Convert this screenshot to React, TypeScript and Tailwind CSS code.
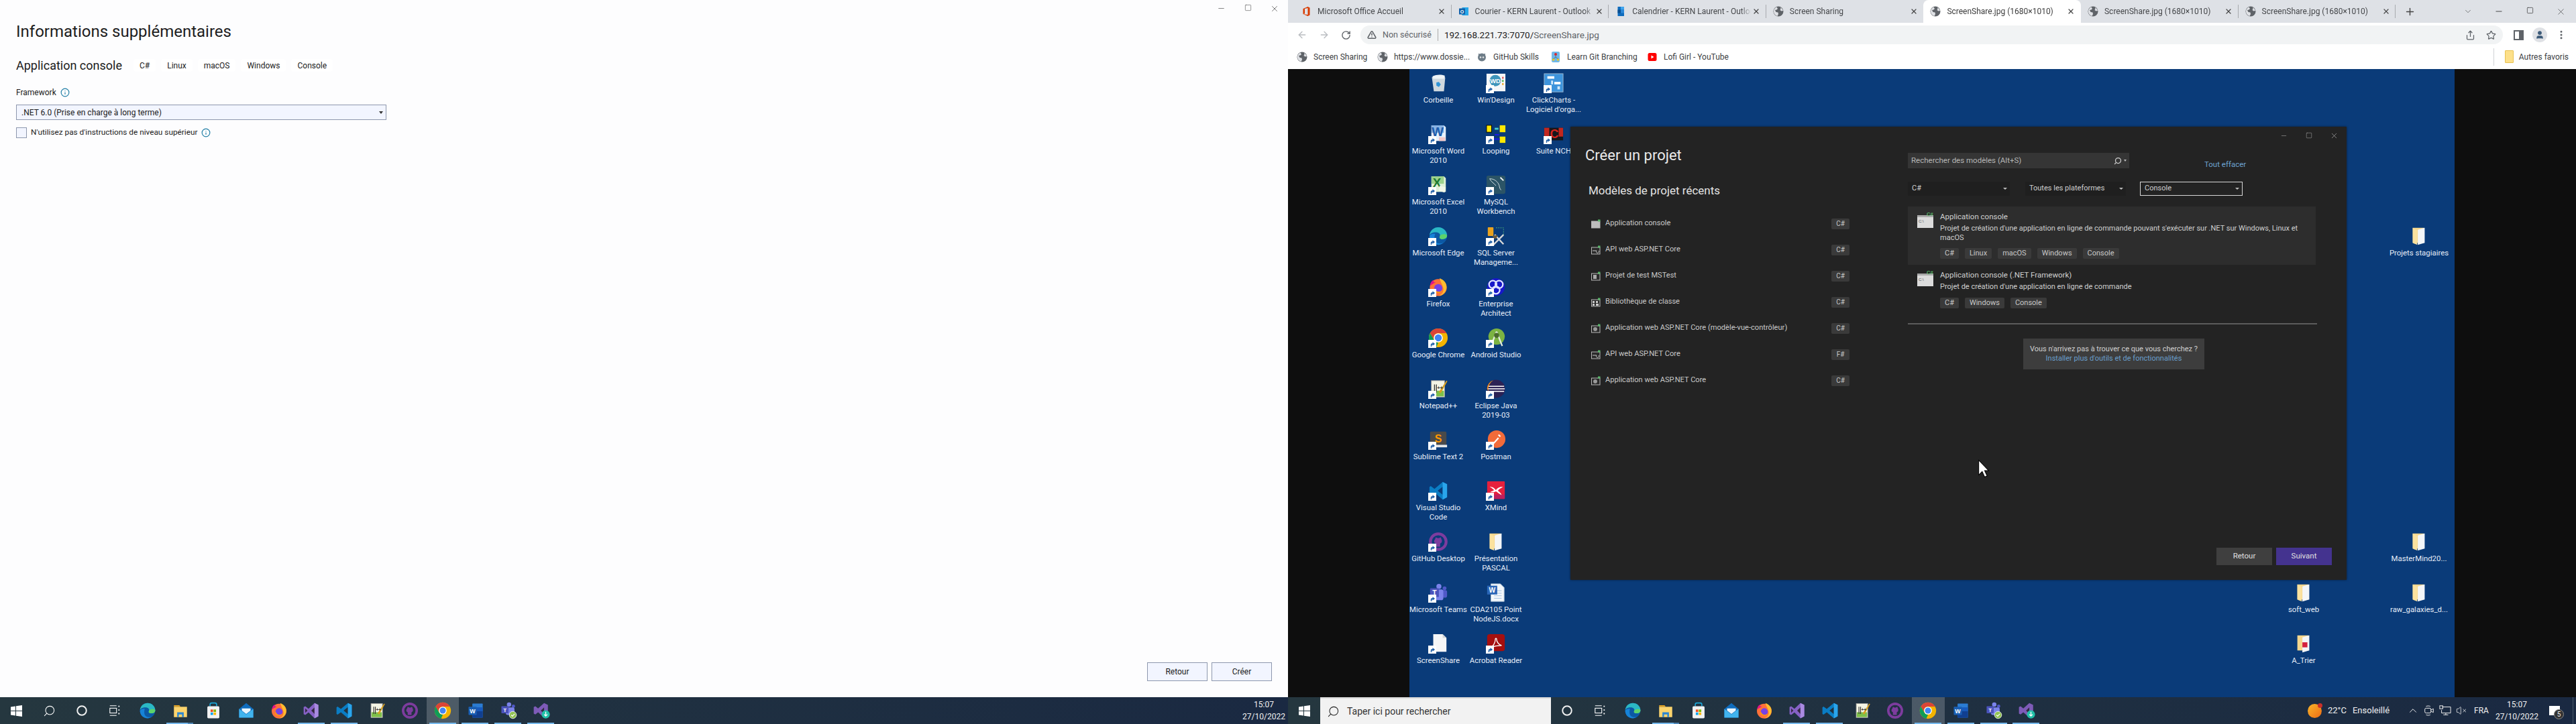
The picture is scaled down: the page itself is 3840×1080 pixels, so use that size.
import type { ReactNode } from "react"
import { ArrowLeft, ArrowRight, ChevronDown, ChevronUp, Info, Minus, MoreVertical, Plus, RotateCw, Search, Share, Square, Star, TriangleAlert, User, VolumeX, X } from "lucide-react"

const Svg = ({ children }: { children: ReactNode }) => (
  <svg viewBox="0 0 32 32" className="size-full">{children}</svg>
)

const Chrome = () => (
  <Svg>
    <circle cx="16" cy="16" r="15" fill="#f4b400" />
    <path d="M3 8.5A15 15 0 0 1 29 8.5H16a7.5 7.5 0 0 0-6.5 11.25z" fill="#db4437" />
    <path d="M3 8.5l6.5 11.25A7.5 7.5 0 0 0 16 23.5L13 30.7A15 15 0 0 1 3 8.5z" fill="#0f9d58" />
    <circle cx="16" cy="16" r="7.2" fill="#fff" />
    <circle cx="16" cy="16" r="5.6" fill="#4285f4" />
  </Svg>
)
const Edge = () => (
  <Svg>
    <circle cx="16" cy="16" r="14" fill="#0c59a4" />
    <path d="M2 15C3 7 9 2 16 2c8 0 14 6 14 13 0 4-3 6-7 6-3 0-5-1-5-3 0-1 1-1 1-3 0-3-3-5-7-5-5 0-9 2-10 5z" fill="#2bb8c4" />
    <path d="M30 15c0 4-3 6-7 6-3 0-5-1-5-3l1-3c3-2 8-3 11 0z" fill="#5dd36b" />
    <path d="M10 20c0 6 6 10 14 7-3 2-5 3-8 3C8 30 2 24 2 16c2-3 6-4 9-3-1 2-1 4-1 7z" fill="#1683d8" />
  </Svg>
)
const Firefox = () => (
  <Svg>
    <circle cx="16" cy="17" r="13.5" fill="#ff7139" />
    <path d="M18 2c8 3 12 9 11 16-1 7-7 12-13 12 6-2 9-6 8-12-1-5-4-9-6-16z" fill="#ffbd2e" />
    <path d="M3 14c0-4 2-7 5-9 0 3 2 4 4 4-3 1-6 3-9 5z" fill="#e31587" />
    <circle cx="16" cy="18" r="6.5" fill="#7542e5" />
    <path d="M10 18c1 5 8 8 13 3-2 6-12 6-15 0z" fill="#ff980e" />
  </Svg>
)
const Vs = () => (
  <Svg>
    <path d="M22 2l7 3.5v21L22 30 11 19.5 5 24l-3-1.5v-13L5 8l6 4.5z" fill="#8661c5" />
    <path d="M22 10l-6 6 6 6z" fill="#33283f" />
    <path d="M5 12v8l4-4z" fill="#33283f" />
    <path d="M22 2l7 3.5v21L22 30z" fill="#a98ae0" />
  </Svg>
)
const VsInstaller = () => (
  <Svg>
    <path d="M21 2l7 3.5v15L21 29 10 19 5 23l-3-1.5v-12L5 8l5 4z" fill="#7e5bb8" />
    <path d="M21 10l-6 6 6 6z" fill="#2f2d3f" />
    <circle cx="24" cy="23" r="7.5" fill="#21c0a8" />
    <path d="M24 18v8m-3-3l3 3 3-3" stroke="#fff" strokeWidth="1.6" fill="none" />
  </Svg>
)
const VsCode = () => (
  <Svg>
    <path d="M23 2l7 3.5v21L23 30 10 19l-6 4.5L2 22v-12l2-1.5L10 13zM23 9.5L15 16l8 6.5z" fill="#0a7dc4" />
    <path d="M23 2l7 3.5v21L23 30v-7.5V9.5z" fill="#2aa5ec" />
  </Svg>
)
const Notepad = () => (
  <Svg>
    <rect x="5" y="3" width="21" height="26" fill="#f5f5e6" stroke="#999" />
    <rect x="6" y="19" width="19" height="9" fill="#7ec04a" />
    <path d="M10 9v13M13 9v13" stroke="#333" strokeWidth="1.4" />
    <path d="M17 21L29 3l1.5 1L20 23z" fill="#d9a021" />
    <text x="14" y="17" fontSize="8" fontWeight="700" fill="#333" fontFamily="Liberation Sans">++</text>
  </Svg>
)
const GithubApp = () => (
  <Svg>
    <circle cx="16" cy="16" r="12.5" fill="#fff0" stroke="#7d3c9e" strokeWidth="4.5" />
    <path d="M11 12l1-3 3 1.5h2l3-1.5 1 3c1.5 2.5 1 6-2 7v5h-7v-5c-3-1-3.5-4.5-1-7z" fill="#7d3c9e" />
  </Svg>
)
const Explorer = () => (
  <Svg>
    <path d="M4 6h10l2 3H4z" fill="#e2a324" />
    <rect x="4" y="9" width="24" height="19" fill="#fbd46d" />
    <path d="M10 28v-9h12v9h-3v-5h-6v5z" fill="#2c86d2" />
  </Svg>
)
const Store = () => (
  <Svg>
    <path d="M10 8V5a3 3 0 0 1 3-3h6a3 3 0 0 1 3 3v3" fill="none" stroke="#1aa7d8" strokeWidth="2" />
    <rect x="5" y="8" width="22" height="22" rx="2" fill="#f2f2f2" />
    <rect x="11" y="14" width="4.5" height="4.5" fill="#f25022" />
    <rect x="16.5" y="14" width="4.5" height="4.5" fill="#7fba00" />
    <rect x="11" y="19.5" width="4.5" height="4.5" fill="#00a4ef" />
    <rect x="16.5" y="19.5" width="4.5" height="4.5" fill="#ffb900" />
  </Svg>
)
const Mail = () => (
  <Svg>
    <path d="M3 13L16 2l13 11v16H3z" fill="#0f6cbd" />
    <path d="M3 13l13 10 13-10v16H3z" fill="#41b4ee" />
    <path d="M8 12h16v4l-8 6-8-6z" fill="#e8f5fd" />
  </Svg>
)
const Word = () => (
  <Svg>
    <rect x="10" y="3" width="19" height="26" rx="1" fill="#2b7cd3" />
    <rect x="10" y="10" width="19" height="7" fill="#185abd" />
    <rect x="10" y="17" width="19" height="12" fill="#103f91" />
    <rect x="3" y="9" width="15" height="15" rx="1" fill="#1a5fb4" />
    <text x="10.5" y="21" textAnchor="middle" fontSize="11" fontWeight="700" fill="#fff" fontFamily="Liberation Sans">W</text>
  </Svg>
)
const Teams = () => (
  <Svg>
    <circle cx="17" cy="6" r="4" fill="#7b83eb" />
    <circle cx="26" cy="9" r="3" fill="#5059c9" />
    <rect x="20" y="12" width="10" height="12" rx="3" fill="#5059c9" />
    <rect x="10" y="11" width="14" height="17" rx="3" fill="#7b83eb" />
    <rect x="3" y="9" width="14" height="14" rx="1" fill="#4b53bc" />
    <text x="10" y="20" textAnchor="middle" fontSize="11" fontWeight="700" fill="#fff" fontFamily="Liberation Sans">T</text>
  </Svg>
)
const TeamsBadge = () => (
  <Svg>
    <circle cx="17" cy="5" r="4" fill="#7b83eb" />
    <circle cx="25" cy="8" r="3" fill="#5059c9" />
    <rect x="11" y="10" width="16" height="14" rx="3" fill="#7b83eb" />
    <rect x="3" y="8" width="13" height="13" rx="1" fill="#4b53bc" />
    <text x="9.5" y="18.5" textAnchor="middle" fontSize="10" fontWeight="700" fill="#fff" fontFamily="Liberation Sans">T</text>
    <circle cx="24" cy="24" r="6.5" fill="#92c353" stroke="#fff" />
    <path d="M21 24l2.2 2.4 4-4.4" stroke="#fff" strokeWidth="1.5" fill="none" />
  </Svg>
)
const Bin = () => (
  <Svg>
    <path d="M6 6l20-2 1 4-2 21H9L6 8z" fill="#cfd8de" />
    <path d="M7 5c6-3 14-3 19-1l-1 5H8z" fill="#eef3f6" />
    <path d="M13 15l4-1 3 4-3 4-4-2z" fill="#2f94d8" />
  </Svg>
)
const WinDesign = () => (
  <Svg>
    <rect x="1" y="1" width="30" height="28" fill="#f4f6f8" />
    <circle cx="15" cy="12" r="9" fill="#3f95bb" />
    <text x="15" y="16" textAnchor="middle" fontSize="10" fontWeight="700" fill="#fff" fontFamily="Liberation Sans">WD</text>
    <rect x="26" y="6" width="2" height="3" fill="#d33" />
    <rect x="26" y="11" width="2" height="3" fill="#3a3" />
    <rect x="26" y="16" width="2" height="3" fill="#e90" />
  </Svg>
)
const ClickCharts = () => (
  <Svg>
    <rect x="1" y="1" width="30" height="29" fill="#3d94dc" stroke="#9cb7cf" />
    <rect x="6" y="5" width="11" height="4" fill="#fff" />
    <rect x="17" y="14" width="10" height="4" fill="#fff" />
    <rect x="12" y="12" width="3" height="6" fill="#cfe8fb" />
    <rect x="22" y="21" width="4" height="5" fill="#cfe8fb" />
  </Svg>
)
const Word2010 = () => (
  <Svg>
    <path d="M5 2h20l3 3v22H5z" fill="#e8f1fb" />
    <path d="M5 2h20v12H5z" fill="#3b7fd0" opacity="0.55" />
    <text x="15" y="19" textAnchor="middle" fontSize="20" fontWeight="700" fill="#1d5cab" fontFamily="Liberation Sans">W</text>
    <rect x="17" y="21" width="10" height="6" fill="#f3c9c9" />
  </Svg>
)
const Excel2010 = () => (
  <Svg>
    <path d="M5 2h20l3 3v22H5z" fill="#dff1d8" />
    <path d="M5 2h20v12H5z" fill="#6fbe5b" opacity="0.6" />
    <text x="14" y="19" textAnchor="middle" fontSize="20" fontWeight="700" fill="#1d7a32" fontFamily="Liberation Sans">X</text>
    <path d="M18 17l10 3-2 8-9-3z" fill="#f1f7e8" />
  </Svg>
)
const Looping = () => (
  <Svg>
    <rect x="1" y="2" width="8" height="11" fill="#ffe800" stroke="#000" />
    <rect x="22" y="2" width="9" height="11" fill="#ffe800" />
    <rect x="22" y="20" width="9" height="10" fill="#ffe800" />
    <path d="M9 24h13M14 17h7" stroke="#1a1ae6" strokeWidth="2" />
    <rect x="14" y="6" width="6" height="3" fill="#4cc" />
  </Svg>
)
const Nch = () => (
  <Svg>
    <rect x="1" y="6" width="30" height="20" fill="#17171b" />
    <rect x="1" y="6" width="8" height="14" fill="#c2271f" />
    <text x="17" y="22" textAnchor="middle" fontSize="19" fontWeight="700" fill="#d9251d" fontFamily="Liberation Sans">C</text>
    <rect x="24" y="6" width="7" height="14" fill="#c2271f" />
  </Svg>
)
const MySql = () => (
  <Svg>
    <rect x="1" y="1" width="30" height="29" rx="3" fill="#2b5466" />
    <path d="M6 6c6 0 11 3 14 8 2 3 1 7 4 10M6 6c2 5 7 7 10 11" stroke="#dbe6ea" strokeWidth="1" fill="none" />
    <path d="M23 4l5 5" stroke="#f2f6f7" strokeWidth="2" />
  </Svg>
)
const Ssms = () => (
  <Svg>
    <rect x="3" y="2" width="9" height="14" rx="1" fill="#e9a21f" />
    <path d="M16 3h12v12" stroke="#4caf7d" strokeWidth="1" strokeDasharray="2 1.5" fill="none" />
    <path d="M12 30L28 14M14 14l14 15" stroke="#d9d9d9" strokeWidth="2.4" />
    <path d="M10 17l7-3 2 2-4 5z" fill="#6d5a3a" />
  </Svg>
)
const Ea = () => (
  <Svg>
    <circle cx="16" cy="16" r="14" fill="#1717c9" />
    <circle cx="11" cy="12" r="6" fill="none" stroke="#dfe3ff" strokeWidth="2.4" />
    <circle cx="21" cy="12" r="6" fill="none" stroke="#dfe3ff" strokeWidth="2.4" />
    <circle cx="16" cy="21" r="6" fill="none" stroke="#dfe3ff" strokeWidth="2.4" />
  </Svg>
)
const Android = () => (
  <Svg>
    <circle cx="17" cy="14" r="13" fill="#7cb342" />
    <path d="M17 6l-9 23M17 6l9 23" stroke="#e4eee0" strokeWidth="2.4" />
    <circle cx="17" cy="12" r="4" fill="#4b6a2e" />
  </Svg>
)
const Eclipse = () => (
  <Svg>
    <circle cx="16" cy="16" r="14.5" fill="#2c2255" />
    <path d="M3 12h26M2 16h28M3 20h26" stroke="#fff" strokeWidth="1.8" />
    <path d="M2 16A14 14 0 0 1 12 2.5 16 16 0 0 0 4 20z" fill="#f7941e" />
  </Svg>
)
const Sublime = () => (
  <Svg>
    <rect x="3" y="3" width="26" height="21" rx="2" fill="#4a4a4a" />
    <rect x="2" y="24" width="28" height="4" fill="#e9e9e9" />
    <text x="16" y="20" textAnchor="middle" fontSize="17" fontWeight="700" fill="#ff9800" fontFamily="Liberation Sans">S</text>
  </Svg>
)
const Postman = () => (
  <Svg>
    <circle cx="17" cy="15" r="14" fill="#f26b3a" />
    <path d="M12 22l8-9M20 8l3 3" stroke="#fff" strokeWidth="2.4" />
  </Svg>
)
const XMind = () => (
  <Svg>
    <rect x="2" y="1" width="28" height="28" rx="1" fill="#e6203d" />
    <rect x="2" y="22" width="28" height="7" fill="#bf1f5c" />
    <path d="M6 10c5-1 8 3 10 5 2-3 6-6 11-5-4 2-7 4-8 6 3 2 5 4 6 7-4-2-7-5-9-6-2 1-5 2-9 1 2-1 5-2 6-3-2-2-4-4-7-5z" fill="#fff" />
  </Svg>
)
const Folder = () => (
  <Svg>
    <path d="M6 3h18v24H6z" fill="#f5d78e" />
    <path d="M6 3c2 2 4 3 7 3v24c-3-1-5-2-7-3z" fill="#fbe29f" />
    <path d="M14 6l11-3v24l-11 3z" fill="#f4f6f8" />
  </Svg>
)
const FolderRed = () => (
  <Svg>
    <path d="M6 3h18v24H6z" fill="#f5d78e" />
    <path d="M14 6l11-3v24l-11 3z" fill="#f4f6f8" />
    <rect x="14" y="14" width="8" height="8" fill="#d4213d" />
  </Svg>
)
const Docx = () => (
  <Svg>
    <path d="M8 2h15l6 6v22H8z" fill="#f3f7fb" stroke="#a9bfd3" />
    <path d="M13 13h12M13 17h12M13 21h12M13 25h12" stroke="#9fbfe0" />
    <rect x="2" y="5" width="16" height="14" fill="#2a66b8" />
    <text x="10" y="16" textAnchor="middle" fontSize="11" fontWeight="700" fill="#fff" fontFamily="Liberation Sans">W</text>
  </Svg>
)
const BlankDoc = () => (
  <Svg>
    <path d="M8 1h15l6 6v22H8z" fill="#f5f6f7" />
    <path d="M23 1l6 6h-6z" fill="#cfd4d8" />
  </Svg>
)
const Acrobat = () => (
  <Svg>
    <rect x="2" y="1" width="28" height="27" rx="4" fill="#a50f0f" />
    <path d="M8 22c4-2 7-8 7-13 0-2 2-2 2 0 0 5 4 9 8 10-5 0-12 1-17 3z" fill="none" stroke="#fff" strokeWidth="1.4" />
  </Svg>
)
const Office = () => (
  <Svg>
    <path d="M7 8l14-6 6 3v22l-6 3-14-6 14 2V6L12 8v15l-5 1z" fill="#d83b01" />
  </Svg>
)
const Outlook = () => (
  <Svg>
    <rect x="11" y="4" width="19" height="24" fill="#28a8ea" />
    <rect x="2" y="7" width="18" height="18" rx="1" fill="#0f5fa8" />
    <text x="11" y="21" textAnchor="middle" fontSize="14" fontWeight="700" fill="#fff" fontFamily="Liberation Sans">O</text>
  </Svg>
)
const Calendar = () => (
  <Svg>
    <rect x="7" y="2" width="19" height="28" rx="1" fill="#0f6cbd" />
    <rect x="16" y="2" width="10" height="9" fill="#41a5ee" />
    <rect x="16" y="11" width="10" height="10" fill="#2b88d8" />
    <rect x="7" y="11" width="9" height="10" fill="#0a4f90" />
  </Svg>
)
const Globe = () => (
  <Svg>
    <circle cx="16" cy="16" r="15" fill="#5f6368" />
    <path d="M11 3l3 5-3 3-5 1 3 6 6 1 1 5-3 6c-6-2-11-7-11-14 0-6 4-11 9-13zM22 4c4 2 7 6 8 10l-5 1-4-3 2-4z" fill="#dfe1e5" />
  </Svg>
)
const Octo = () => (
  <Svg>
    <circle cx="16" cy="17" r="12" fill="#6e7d88" />
    <path d="M6 5l7 5h6l7-5v14H6z" fill="#6e7d88" />
    <circle cx="12" cy="17" r="2.5" fill="#e6e6e6" />
    <circle cx="20" cy="17" r="2.5" fill="#e6e6e6" />
  </Svg>
)
const GitBranch = () => (
  <Svg>
    <rect x="4" y="0" width="24" height="32" rx="4" fill="#6fb7e8" />
    <circle cx="16" cy="8" r="4" fill="#d7262c" />
    <circle cx="9" cy="24" r="3.5" fill="#e8c72a" />
    <circle cx="23" cy="24" r="3.5" fill="#e8c72a" />
    <path d="M16 12v5M16 17l-7 4M16 17l7 4" stroke="#333" />
  </Svg>
)
const Youtube = () => (
  <Svg>
    <rect x="3" y="4" width="26" height="24" rx="5" fill="#f00" />
    <path d="M13 11l8 5-8 5z" fill="#fff" />
  </Svg>
)
const WinLogo = () => (
  <svg viewBox="0 0 32 32" className="size-[17px]">
    <path d="M0 4.5l13-1.8V15H0zM15 2.4L32 0v15H15zM0 17h13v12.3L0 27.5zM15 17h17v15l-17-2.4z" fill="#fff" />
  </svg>
)
const TaskViewIcon = () => (
  <svg viewBox="0 0 20 20" className="size-[18px]" fill="none" stroke="#fff" strokeWidth="1.2">
    <path d="M2 2h11M2 18h11" />
    <rect x="2" y="6" width="11" height="8" />
    <path d="M16 3h2M16 9h2M16 15h2" strokeWidth="2" />
  </svg>
)
const CortanaIcon = () => (
  <svg viewBox="0 0 20 20" className="size-[18px]">
    <circle cx="10" cy="10" r="7.5" fill="none" stroke="#f2f2f2" strokeWidth="2.2" />
  </svg>
)

const ConsoleTile = () => (
  <svg viewBox="0 0 24 24" className="size-6 shrink-0">
    <rect x="0" y="5" width="24" height="19" fill="#dcdcdc" />
    <rect x="0" y="5" width="24" height="3" fill="#aaa" />
    <text x="2" y="16" fontSize="6" fill="#555" fontFamily="Liberation Sans">C:\</text>
    <text x="14" y="6" fontSize="7.5" fontWeight="700" fill="#59b76a" fontFamily="Liberation Sans">C#</text>
  </svg>
)
const SmallTile = ({ kind }: { kind: number }) => (
  <svg viewBox="0 0 14 14" className="size-[14px] shrink-0">
    <rect x="0.5" y="3" width="12.5" height="10" fill={kind === 0 ? "#bdbdbd" : "#2a2a2a"} stroke="#b8b8b8" />
    <rect x="10" y="0.5" width="3.5" height="3" fill="#59b76a" />
    {kind === 1 && <path d="M2 8h6M8 8a2 2 0 1 0 3 0" stroke="#c8c8c8" fill="none" />}
    {kind === 2 && <rect x="3" y="5" width="5" height="6" fill="#aaa" />}
    {kind === 3 && <path d="M2 5h3v3H2zM7 5h3v3H7zM2 9h3v3H2zM7 9h4v3H7z" fill="#ccc" />}
    {kind === 4 && <circle cx="6" cy="8" r="3" fill="#999" />}
  </svg>
)

type DeskItem = { lines: string[]; icon: ReactNode; pos?: string; shortcut?: boolean }

const desktopItems: DeskItem[] = [
  { lines: ["Corbeille"], icon: <Bin /> },
  { lines: ["Microsoft Word", "2010"], icon: <Word2010 />, shortcut: true },
  { lines: ["Microsoft Excel", "2010"], icon: <Excel2010 />, shortcut: true },
  { lines: ["Microsoft Edge"], icon: <Edge />, shortcut: true },
  { lines: ["Firefox"], icon: <Firefox />, shortcut: true },
  { lines: ["Google Chrome"], icon: <Chrome />, shortcut: true },
  { lines: ["Notepad++"], icon: <Notepad />, shortcut: true },
  { lines: ["Sublime Text 2"], icon: <Sublime />, shortcut: true },
  { lines: ["Visual Studio", "Code"], icon: <VsCode />, shortcut: true },
  { lines: ["GitHub Desktop"], icon: <GithubApp />, shortcut: true },
  { lines: ["Microsoft Teams"], icon: <Teams />, shortcut: true },
  { lines: ["ScreenShare"], icon: <BlankDoc />, shortcut: true },
  { lines: ["Win'Design"], icon: <WinDesign />, shortcut: true },
  { lines: ["Looping"], icon: <Looping />, shortcut: true },
  { lines: ["MySQL", "Workbench"], icon: <MySql />, shortcut: true },
  { lines: ["SQL Server", "Manageme..."], icon: <Ssms />, shortcut: true },
  { lines: ["Enterprise", "Architect"], icon: <Ea />, shortcut: true },
  { lines: ["Android Studio"], icon: <Android />, shortcut: true },
  { lines: ["Eclipse Java", "2019-03"], icon: <Eclipse />, shortcut: true },
  { lines: ["Postman"], icon: <Postman />, shortcut: true },
  { lines: ["XMind"], icon: <XMind />, shortcut: true },
  { lines: ["Présentation", "PASCAL"], icon: <Folder /> },
  { lines: ["CDA2105 Point", "NodeJS.docx"], icon: <Docx /> },
  { lines: ["Acrobat Reader"], icon: <Acrobat />, shortcut: true },
  { lines: ["ClickCharts -", "Logiciel d'orga..."], icon: <ClickCharts />, shortcut: true },
  { lines: ["Suite NCH"], icon: <Nch />, shortcut: true },
  { lines: ["Projets stagiaires"], icon: <Folder />, pos: "col-start-18 row-start-4" },
  { lines: ["MasterMind20..."], icon: <Folder />, pos: "col-start-18 row-start-10" },
  { lines: ["soft_web"], icon: <Folder />, pos: "col-start-16 row-start-11" },
  { lines: ["raw_galaxies_d..."], icon: <Folder />, pos: "col-start-18 row-start-11" },
  { lines: ["A_Trier"], icon: <FolderRed />, pos: "col-start-16 row-start-12" },
]

const recent = [
  { name: "Application console", lang: "C#", kind: 0 },
  { name: "API web ASP.NET Core", lang: "C#", kind: 1 },
  { name: "Projet de test MSTest", lang: "C#", kind: 2 },
  { name: "Bibliothèque de classe", lang: "C#", kind: 3 },
  { name: "Application web ASP.NET Core (modèle-vue-contrôleur)", lang: "C#", kind: 4 },
  { name: "API web ASP.NET Core", lang: "F#", kind: 1 },
  { name: "Application web ASP.NET Core", lang: "C#", kind: 4 },
]

const tabs = [
  { title: "Microsoft Office Accueil", icon: <Office /> },
  { title: "Courier - KERN Laurent - Outlook", icon: <Outlook /> },
  { title: "Calendrier - KERN Laurent - Outlook", icon: <Calendar /> },
  { title: "Screen Sharing", icon: <Globe /> },
  { title: "ScreenShare.jpg (1680×1010)", icon: <Globe />, active: true },
  { title: "ScreenShare.jpg (1680×1010)", icon: <Globe /> },
  { title: "ScreenShare.jpg (1680×1010)", icon: <Globe /> },
]

const bookmarks = [
  { label: "Screen Sharing", icon: <Globe />, width: "w-[78px]" },
  { label: "https://www.dossie...", icon: <Globe />, width: "w-[106px]" },
  { label: "GitHub Skills", icon: <Octo />, width: "w-[68px]" },
  { label: "Learn Git Branching", icon: <GitBranch />, width: "w-[102px]" },
  { label: "Lofi Girl - YouTube", icon: <Youtube />, width: "w-[97px]" },
]

const taskApps: { icon: ReactNode; run?: boolean; active?: boolean; double?: boolean }[] = [
  { icon: <Edge /> },
  { icon: <Explorer />, run: true, double: true },
  { icon: <Store /> },
  { icon: <Mail /> },
  { icon: <Firefox /> },
  { icon: <Vs />, run: true },
  { icon: <VsCode />, run: true },
  { icon: <Notepad /> },
  { icon: <GithubApp /> },
  { icon: <Chrome />, run: true, active: true },
  { icon: <Word />, run: true },
  { icon: <TeamsBadge />, run: true },
  { icon: <VsInstaller />, run: true },
]

function TaskCell({ children, run, active, double }: { children: ReactNode; run?: boolean; active?: boolean; double?: boolean }) {
  return (
    <div className={`relative flex h-10 w-[48.9px] shrink-0 items-center justify-center ${active ? "bg-white/20" : ""}`}>
      {children}
      {run && <span className={`absolute bottom-0 left-1 h-[2px] bg-[#76b9ed] ${double ? "w-[32px]" : "w-[40px]"}`} />}
      {double && <span className="absolute bottom-0 left-[36px] h-[2px] w-[8px] bg-[#4f86b5]" />}
    </div>
  )
}

function TaskApps() {
  return (
    <>
      {taskApps.map((app, i) => (
        <TaskCell key={i} run={app.run} active={app.active} double={app.double}>
          <div className="size-[26px]">{app.icon}</div>
        </TaskCell>
      ))}
    </>
  )
}

function Clock() {
  return (
    <div className="flex w-[72px] shrink-0 flex-col items-center text-[12px] leading-[18px] text-[#f0f0f0]">
      <span>15:07</span>
      <span>27/10/2022</span>
    </div>
  )
}

function VsTag({ children }: { children: ReactNode }) {
  return <span className="flex h-[19px] items-center rounded-[4px] bg-white px-[9px] text-[12px] text-[#222]">{children}</span>
}

function InfoDot() {
  return <Info size={14} strokeWidth={2} className="text-[#1e7da5]" />
}

function AdditionalInfo() {
  return (
    <div className="flex h-[1040px] flex-col bg-[#fdfdfe] px-6 text-[#1b1b1b]">
      <div className="-mr-6 flex h-[31px] shrink-0 items-start justify-end pt-[6px]">
        <span className="flex w-10 justify-center"><Minus size={13} strokeWidth={1} /></span>
        <span className="flex w-10 justify-center"><Square size={11} strokeWidth={1} /></span>
        <span className="flex w-10 justify-center"><X size={14} strokeWidth={1} /></span>
      </div>
      <h1 className="h-8 text-[24px] leading-8 text-[#1e1e1e]">Informations supplémentaires</h1>
      <div className="mt-[25px] flex h-[19px] items-center gap-2">
        <h2 className="mr-[9px] text-[18px] leading-[19px]">Application console</h2>
        <VsTag>C#</VsTag>
        <VsTag>Linux</VsTag>
        <VsTag>macOS</VsTag>
        <VsTag>Windows</VsTag>
        <VsTag>Console</VsTag>
      </div>
      <div className="mt-[23px] flex h-4 items-center gap-[6px] text-[12px]">
        Framework <InfoDot />
      </div>
      <div className="mt-[10px] flex h-[23px] w-[552px] items-center justify-between border border-[#8d97ad] bg-[#f2f5ff] pr-[4px] pl-[7px] text-[12px]">
        <span>.NET 6.0 (Prise en charge à long terme)</span>
        <span className="h-0 w-0 border-x-[3px] border-t-[4px] border-x-transparent border-t-[#333]" />
      </div>
      <div className="mt-[10px] flex items-center gap-[6px] text-[11.8px]">
        <span className="size-4 border border-[#8d97ad] bg-[#f2f5ff]" />
        <span>N'utilisez pas d'instructions de niveau supérieur</span>
        <InfoDot />
      </div>
      <div className="mt-auto mb-6 flex justify-end gap-[6px] text-[12px]">
        <button className="h-7 w-[90px] border border-[#8d97ad] bg-[#f2f5ff]">Retour</button>
        <button className="h-7 w-[90px] border border-[#8d97ad] bg-[#f2f5ff]">Créer</button>
      </div>
    </div>
  )
}

function DarkTag({ children }: { children: ReactNode }) {
  return <span className="flex h-4 items-center rounded-[2px] bg-[#3a3a3a] px-[7px] text-[11px] text-[#c8c8c8]">{children}</span>
}

function Dropdown({ label, width, focused }: { label: string; width: string; focused?: boolean }) {
  return (
    <div className={`flex h-[21px] items-center justify-between pr-[4px] pl-[6px] text-[11px] text-[#cfcfcf] ${width} ${focused ? "border border-[#d8d8d8]" : "bg-[#1f1f1f]"}`}>
      <span>{label}</span>
      <span className="h-0 w-0 border-x-[3px] border-t-[3px] border-x-transparent border-t-[#bbb]" />
    </div>
  )
}

function CreateProjectWindow() {
  return (
    <div className="absolute top-[86px] left-[240px] flex h-[676px] w-[1157px] flex-col bg-[#232323] shadow-[0_0_3px_rgba(0,0,0,0.5)]">
      <div className="flex h-[26px] shrink-0 items-center justify-end text-[#d0d0d0]">
        <span className="flex w-[37.5px] justify-center"><Minus size={11} strokeWidth={1} /></span>
        <span className="flex w-[37.5px] justify-center"><Square size={10} strokeWidth={1} /></span>
        <span className="flex w-[37.5px] justify-center"><X size={13} strokeWidth={1} /></span>
      </div>
      <div className="flex flex-1">
        <div className="w-[503px] shrink-0 pl-[22px]">
          <h1 className="mt-[1px] h-8 text-[22px] leading-8 text-[#eaeaea]">Créer un projet</h1>
          <h2 className="mt-6 h-6 pl-[5px] text-[17px] leading-6 text-[#e4e4e4]">Modèles de projet récents</h2>
          <div className="mt-[18px] w-[394px]">
            {recent.map((row, i) => (
              <div key={i} className="flex h-[39px] items-center pl-[9px] text-[11.1px] text-[#c9c9c9]">
                <SmallTile kind={row.kind} />
                <span className="ml-[7px]">{row.name}</span>
                <span className="ml-auto flex h-4 w-[27px] items-center justify-center rounded-[2px] bg-[#3a3a3a] text-[10px] text-[#c8c8c8]">{row.lang}</span>
              </div>
            ))}
          </div>
        </div>
        <div className="flex-1">
          <div className="mt-[13px] flex items-start">
            <div className="flex h-[23px] w-[330px] items-center justify-between bg-[#353535] pr-[4px] pl-[5px] text-[11.5px] text-[#b5b5b5]">
              <span>Rechercher des modèles (Alt+S)</span>
              <span className="flex items-center gap-[3px]">
                <Search size={12} strokeWidth={2.5} className="-scale-x-100 text-[#cfcfcf]" />
                <span className="h-0 w-0 border-x-[2px] border-t-[3px] border-x-transparent border-t-[#bbb]" />
              </span>
            </div>
            <span className="mt-[10px] ml-[112px] text-[11.5px] leading-[14px] text-[#6ea4d2]">Tout effacer</span>
          </div>
          <div className="mt-[19px] flex items-center">
            <Dropdown label="C#" width="w-[152px]" />
            <div className="w-[23px]" />
            <Dropdown label="Toutes les plateformes" width="w-[150px]" />
            <div className="w-[21px]" />
            <Dropdown label="Console" width="w-[153px]" focused />
          </div>
          <div className="mt-4 flex h-[87px] w-[608px] gap-[10px] bg-[#2d2d2d] pt-[8px] pl-[14px]">
            <ConsoleTile />
            <div className="flex-1 pr-[16px] text-[11px] leading-[14px] text-[#d0d0d0]">
              <div className="text-[11.5px]">Application console</div>
              <div className="mt-1">Projet de création d'une application en ligne de commande pouvant s'exécuter sur .NET sur Windows, Linux et macOS</div>
              <div className="mt-2 flex gap-[9px]">
                <DarkTag>C#</DarkTag>
                <DarkTag>Linux</DarkTag>
                <DarkTag>macOS</DarkTag>
                <DarkTag>Windows</DarkTag>
                <DarkTag>Console</DarkTag>
              </div>
            </div>
          </div>
          <div className="flex h-[78px] w-[608px] gap-[10px] pt-[8px] pl-[14px]">
            <ConsoleTile />
            <div className="flex-1 text-[11px] leading-[14px] text-[#d0d0d0]">
              <div className="text-[11.5px]">Application console (.NET Framework)</div>
              <div className="mt-1">Projet de création d'une application en ligne de commande</div>
              <div className="mt-[9px] flex gap-[9px]">
                <DarkTag>C#</DarkTag>
                <DarkTag>Windows</DarkTag>
                <DarkTag>Console</DarkTag>
              </div>
            </div>
          </div>
          <div className="mt-[9px] h-[2px] w-[610px] bg-[#5c5c5c]" />
          <div className="mt-[21px] ml-[172px] flex h-[46px] w-[270px] flex-col items-center justify-center bg-[#3d3d3d] text-[11px] leading-[14px]">
            <span className="text-[#d0d0d0]">Vous n'arrivez pas à trouver ce que vous cherchez ?</span>
            <span className="text-[#6a9fcc]">Installer plus d'outils et de fonctionnalités</span>
          </div>
        </div>
      </div>
      <div className="flex justify-end gap-[6px] pr-[22px] pb-[22px] text-[11.5px] text-[#e0e0e0]">
        <button className="h-[26px] w-[83px] bg-[#3f3f3f]">Retour</button>
        <button className="h-[26px] w-[83px] bg-[#44338f]">Suivant</button>
      </div>
    </div>
  )
}

function Desktop() {
  return (
    <div className="relative w-[1558px] bg-[#0a3b79] pt-[6px]">
      <div className="grid grid-flow-col grid-cols-[repeat(18,86px)] grid-rows-[repeat(12,76px)]">
        {desktopItems.map((item) => (
          <div key={item.lines.join()} className={`flex flex-col items-center text-center ${item.pos ?? ""}`}>
            <div className="relative size-[30px]">
              {item.icon}
              {item.shortcut && (
                <span className="absolute bottom-0 left-0 flex size-[12px] items-center justify-center bg-white">
                  <svg viewBox="0 0 10 10" className="size-[9px]">
                    <path d="M2 9V5.5C2 4 3 3.5 4.5 3.5H5V1.5L9 4.5 5 7.5V5.5C4 5.5 3.5 6.5 3.5 9z" fill="#1f5fa8" />
                  </svg>
                </span>
              )}
            </div>
            <div className="mt-[3px] text-[11.4px] leading-[14px] whitespace-nowrap text-[#e6edf8]">
              {item.lines.map((line) => (
                <div key={line}>{line}</div>
              ))}
            </div>
          </div>
        ))}
      </div>
      <CreateProjectWindow />
      <svg viewBox="0 0 12 19" className="absolute top-[582px] left-[847px] h-[28px] w-[18px]">
        <path d="M1 1v15l3.5-3.5 2.5 5.5 2.5-1-2.5-5.500H11z" fill="#fff" stroke="#000" strokeWidth="0.7" />
      </svg>
    </div>
  )
}

function TabStrip() {
  return (
    <div className="flex h-[34px] items-center bg-[#dee1e6] pl-[9px] text-[12px] text-[#45474a]">
      {tabs.map((tab, i) => (
        <div key={i} className={`relative flex h-full w-[234.6px] shrink-0 items-center pl-[10px] ${tab.active ? "rounded-t-lg bg-white text-[#3c3c3c]" : ""}`}>
          <span className="size-4 shrink-0">{tab.icon}</span>
          <span className="ml-[9px] w-[177px] overflow-hidden whitespace-nowrap [mask-image:linear-gradient(to_right,black_92%,transparent)]">{tab.title}</span>
          <X size={12} strokeWidth={2.4} className="ml-[2px] shrink-0 text-[#444]" />
          {!tab.active && i !== 3 && <span className="absolute right-0 h-5 w-px bg-[#a9abaf]" />}
        </div>
      ))}
      <span className="flex w-[42px] justify-center"><Plus size={17} strokeWidth={2} className="text-[#444]" /></span>
      <div className="ml-auto flex text-[#333]">
        <span className="flex w-[46px] justify-center"><ChevronDown size={14} strokeWidth={1} /></span>
        <span className="flex w-[46px] justify-center"><Minus size={14} strokeWidth={1.5} /></span>
        <span className="flex w-[46px] justify-center"><Square size={11} strokeWidth={1.5} /></span>
        <span className="flex w-[46px] justify-center"><X size={15} strokeWidth={1} /></span>
      </div>
    </div>
  )
}

function AddressBar() {
  return (
    <div className="flex h-9 items-center bg-white pl-[4px] text-[#5f6368]">
      <span className="flex w-[33px] justify-center text-[#b9bcc0]"><ArrowLeft size={16} /></span>
      <span className="flex w-[33px] justify-center text-[#b9bcc0]"><ArrowRight size={16} /></span>
      <span className="flex w-[33px] justify-center"><RotateCw size={15} strokeWidth={2.2} /></span>
      <div className="ml-[5px] flex h-7 flex-1 items-center rounded-full bg-[#f1f3f4] pr-[8px] pl-[10px] text-[13px]">
        <TriangleAlert size={14} strokeWidth={2.6} />
        <span className="ml-[9px] text-[12.5px]">Non sécurisé</span>
        <span className="mx-[9px] h-[18px] w-px bg-[#aaa]" />
        <span className="text-[13.5px] text-[#222]">192.168.221.73:7070/<span className="text-[#5f6368]">ScreenShare.jpg</span></span>
        <Share size={15} className="ml-auto" />
        <Star size={15} strokeWidth={2} className="mr-[2px] ml-[16px]" />
      </div>
      <span className="ml-[7px] flex w-8 justify-center"><span className="flex h-[15px] w-[15px] justify-end border-2 border-[#5f6368]"><span className="h-full w-[5px] bg-[#5f6368]" /></span></span>
      <span className="flex w-8 justify-center"><span className="flex size-[22px] items-center justify-center rounded-full bg-[#dfe1e5]"><User size={14} fill="#3c5a78" className="text-[#3c5a78]" /></span></span>
      <span className="flex w-8 justify-center"><MoreVertical size={16} strokeWidth={2.5} /></span>
      <span className="w-[6px]" />
    </div>
  )
}

function Bookmarks() {
  return (
    <div className="flex h-[33px] items-center gap-[17px] bg-white pb-1 pl-[13px] text-[12px] text-[#3c4043]">
      {bookmarks.map((b) => (
        <div key={b.label} className="flex items-center gap-[9px]">
          <span className="size-4 shrink-0">{b.icon}</span>
          <span className={`whitespace-nowrap ${b.width}`}>{b.label}</span>
        </div>
      ))}
      <span className="ml-auto h-[26px] w-px bg-[#d0d3d6]" />
      <div className="mr-[11px] -ml-[1px] flex items-center gap-[8px]">
        <span className="h-[19px] w-[13px] rounded-[1px] border border-[#e8c251] bg-[#fde08a]" />
        <span>Autres favoris</span>
      </div>
    </div>
  )
}

function LeftTaskbar() {
  return (
    <div className="flex h-10 items-center bg-linear-to-r from-[#25373f] to-[#1a2942]">
      <TaskCell><WinLogo /></TaskCell>
      <TaskCell><Search size={19} strokeWidth={1.3} className="-scale-x-100 text-white" /></TaskCell>
      <TaskCell><CortanaIcon /></TaskCell>
      <TaskCell><TaskViewIcon /></TaskCell>
      <TaskApps />
      <div className="ml-auto"><Clock /></div>
    </div>
  )
}

function RightTaskbar() {
  return (
    <div className="flex h-10 items-center bg-linear-to-r from-[#25373f] to-[#1a2942] text-[#f0f0f0]">
      <div className="flex h-10 w-12 shrink-0 items-center justify-center"><WinLogo /></div>
      <div className="flex h-10 w-[344px] shrink-0 items-center border-t-2 border-[#d8d8d8] bg-[#f2f2f2] pl-[10px] text-[14px] text-[#333]">
        <Search size={19} strokeWidth={1.3} className="-scale-x-100 text-[#222]" />
        <span className="ml-[11px]">Taper ici pour rechercher</span>
      </div>
      <TaskCell><CortanaIcon /></TaskCell>
      <TaskCell><TaskViewIcon /></TaskCell>
      <TaskApps />
      <div className="ml-auto flex items-center text-[12px]">
        <div className="flex w-[145px] items-center text-[13px]">
          <span className="relative size-[21px] rounded-full bg-linear-to-br from-[#f7b52a] to-[#ec6a14]">
            <span className="absolute -top-[1px] -right-[1px] size-[7px] rounded-full bg-[#c8302b]" />
          </span>
          <span className="ml-[9px]">22°C</span>
          <span className="ml-[9px]">Ensoleillé</span>
        </div>
        <span className="flex w-6 justify-center"><ChevronUp size={18} strokeWidth={1.3} /></span>
        <span className="flex w-6 justify-center">
          <svg viewBox="0 0 20 20" className="size-[18px]" fill="none" stroke="#eee" strokeWidth="1.1">
            <rect x="3" y="6" width="10" height="8" rx="2" />
            <path d="M13 9l4-2v6l-4-2M5 3c2-1 5-1 7 0M5 17c2 1 5 1 7 0" />
          </svg>
        </span>
        <span className="flex w-6 justify-center">
          <svg viewBox="0 0 20 20" className="size-[18px]" fill="none" stroke="#eee" strokeWidth="1.1">
            <path d="M5 4h14v10H4V9M11 14v3M7 17h8" />
            <rect x="1" y="2" width="5" height="5" />
          </svg>
        </span>
        <span className="flex w-[23px] justify-center"><VolumeX size={16} strokeWidth={1.2} /></span>
        <span className="w-9 pl-2">FRA</span>
        <Clock />
        <span className="flex w-10 justify-center">
          <span className="relative h-[14px] w-4 bg-white">
            <span className="absolute -right-[6px] -bottom-[6px] flex size-[15px] items-center justify-center rounded-full border border-[#888] bg-[#333] text-[10px]">5</span>
          </span>
        </span>
        <span className="flex w-3 justify-end pr-[4px]"><span className="h-10 w-px bg-[#4a5a6a]" /></span>
      </div>
    </div>
  )
}

export default function App() {
  return (
    <div className="flex h-[1080px] w-[3840px] overflow-hidden font-['Roboto',sans-serif]">
      <div className="flex w-[1920px] shrink-0 flex-col">
        <AdditionalInfo />
        <LeftTaskbar />
      </div>
      <div className="flex w-[1920px] shrink-0 flex-col">
        <TabStrip />
        <AddressBar />
        <Bookmarks />
        <div className="flex flex-1 justify-center bg-[#0e0e0e]">
          <Desktop />
        </div>
        <RightTaskbar />
      </div>
    </div>
  )
}
